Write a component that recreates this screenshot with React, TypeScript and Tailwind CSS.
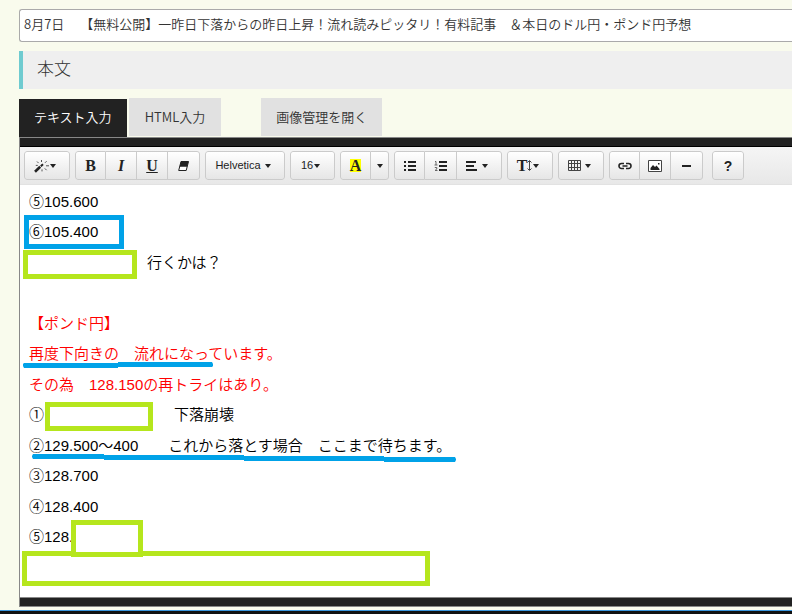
import { ReactNode, useState } from "react";
import clsx from "clsx";

type ToolType = {
  label: string;
  width: string;
  menu?: boolean;
  content: ReactNode;
};

function Caret() {
  return (
    <svg width="6" height="4" viewBox="0 0 6 4" aria-hidden="true">
      <path d="M0 0h6L3 4z" fill="#222" />
    </svg>
  );
}

function MagicIcon() {
  return (
    <svg width="15" height="14" viewBox="0 0 15 14" aria-hidden="true">
      <path d="M1 12.8 6.2 7.8" stroke="#222" strokeWidth="2.6" />
      <path d="M6.8 7.2 9 5.2" stroke="#222" strokeWidth="2" />
      <path
        d="M7.5 1v2M3 2.5l1.6 1.6M1.8 6.4h2M12.6 2.2 11 3.8M12 6.8h3M10.8 9.4l1.8 1.8M8 10.4v2"
        stroke="#555"
        strokeWidth="1"
      />
    </svg>
  );
}

function EraserIcon() {
  return (
    <svg width="11" height="10" viewBox="0 0 11 10" aria-hidden="true">
      <path d="M3 .5h7.5L8.2 9.5H.7z" fill="#fff" stroke="#222" />
      <path d="M3 .5h7.5L9.2 5.8H1.6z" fill="#222" />
    </svg>
  );
}

function ListIcon() {
  return (
    <svg width="12" height="10" viewBox="0 0 12 10" aria-hidden="true">
      <path d="M0 1h2M0 5h2M0 9h2M4 1h8M4 5h8M4 9h8" stroke="#222" strokeWidth="2" />
    </svg>
  );
}

function OrderedIcon() {
  return (
    <svg width="13" height="12" viewBox="0 0 13 12" aria-hidden="true">
      <path d="M5 2h8M5 6h8M5 10h8" stroke="#222" strokeWidth="2" />
      <path
        d="M1 1.5h1V5M.5 5h3M.8 7.5h2V9L1 10.5h2.5"
        fill="none"
        stroke="#666"
        strokeWidth="1"
      />
    </svg>
  );
}

function AlignIcon() {
  return (
    <svg width="12" height="10" viewBox="0 0 12 10" aria-hidden="true">
      <path d="M0 1h10M0 5h8M0 9h11" stroke="#222" strokeWidth="2" />
    </svg>
  );
}

function HeightIcon() {
  return (
    <svg width="5" height="11" viewBox="0 0 5 11" aria-hidden="true">
      <path d="M2.5 1v9M.5 2.5l2-2 2 2M.5 8.5l2 2 2-2" fill="none" stroke="#444" />
    </svg>
  );
}

function TableIcon() {
  return (
    <svg width="13" height="11" viewBox="0 0 13 11" aria-hidden="true">
      <path
        d="M.5.5h12v10H.5zM3.5.5v10M6.5.5v10M9.5.5v10M.5 3.5h12M.5 7.5h12"
        fill="none"
        stroke="#444"
      />
    </svg>
  );
}

function LinkIcon() {
  return (
    <svg width="14" height="8" viewBox="0 0 14 8" aria-hidden="true">
      <path
        d="M6 6.5H3.5a2.5 2.5 0 0 1 0-5H6M8 1.5h2.5a2.5 2.5 0 0 1 0 5H8M4.5 4h5"
        fill="none"
        stroke="#222"
        strokeWidth="1.6"
      />
    </svg>
  );
}

function PictureIcon() {
  return (
    <svg width="14" height="12" viewBox="0 0 14 12" aria-hidden="true">
      <path d="M.5.5h13v11H.5z" fill="#fff" stroke="#444" />
      <path d="M2.5 10V8L5 5l2 2 1.5-1.5 3 3.500v1z" fill="#222" />
      <path d="M10 3h1.500v1.500H10z" fill="#222" />
    </svg>
  );
}

const serif = "font-['Liberation_Serif',serif] text-base";

const toolGroups: ToolType[][] = [
  [{ label: "スタイル", width: "w-[46px]", menu: true, content: <MagicIcon /> }],
  [
    { label: "太字", width: "w-[31px]", content: <b className={serif}>B</b> },
    { label: "斜体", width: "w-[31px]", content: <b className={clsx(serif, "italic")}>I</b> },
    { label: "下線", width: "w-[31px]", content: <b className={clsx(serif, "underline")}>U</b> },
    { label: "書式クリア", width: "w-[32px]", content: <EraserIcon /> },
  ],
  [
    {
      label: "フォント",
      width: "w-[80px]",
      menu: true,
      content: <span className="mr-[3px] text-[11px]">Helvetica</span>,
    },
  ],
  [
    {
      label: "文字サイズ",
      width: "w-[45px]",
      menu: true,
      content: <span className="text-[11px]">16</span>,
    },
  ],
  [
    {
      label: "文字色",
      width: "w-[31px]",
      content: <b className={clsx(serif, "bg-[#ffff00] leading-[13px]")}>A</b>,
    },
    { label: "色を選択", width: "w-[18px]", menu: true, content: null },
  ],
  [
    { label: "箇条書き", width: "w-[31px]", content: <ListIcon /> },
    { label: "番号付きリスト", width: "w-[32px]", content: <OrderedIcon /> },
    {
      label: "配置",
      width: "w-[45px]",
      menu: true,
      content: (
        <span className="mr-[3px]">
          <AlignIcon />
        </span>
      ),
    },
  ],
  [
    {
      label: "行の高さ",
      width: "w-[46px]",
      menu: true,
      content: (
        <span className="flex items-center">
          <b className={serif}>T</b>
          <HeightIcon />
        </span>
      ),
    },
  ],
  [
    {
      label: "表",
      width: "w-[46px]",
      menu: true,
      content: (
        <span className="mr-[3px]">
          <TableIcon />
        </span>
      ),
    },
  ],
  [
    { label: "リンク", width: "w-[31px]", content: <LinkIcon /> },
    { label: "画像", width: "w-[31px]", content: <PictureIcon /> },
    { label: "水平線", width: "w-[32px]", content: <span className="h-[2px] w-[9px] bg-[#222]" /> },
  ],
  [{ label: "ヘルプ", width: "w-[32px]", content: <b>?</b> }],
];

function Toolbar() {
  return (
    <div
      role="toolbar"
      className="flex gap-[5px] border-b border-[#e2e2e2] bg-linear-to-b from-[#f5f5f5] to-[#e8e8e8] px-1 py-1 font-['Liberation_Sans',sans-serif] text-sm text-[#222]"
    >
      {toolGroups.map((group, i) => (
        <div
          key={i}
          className="flex h-[29px] shrink-0 divide-x divide-[#ccc] overflow-hidden rounded-[3px] last:ml-1"
        >
          {group.map((tool) => (
            <button
              key={tool.label}
              type="button"
              aria-label={tool.label}
              aria-haspopup={tool.menu ? "menu" : undefined}
              className={clsx(
                "flex items-center justify-center gap-px border-y border-[#cbcbcb] bg-linear-to-b from-white to-[#e6e6e6] first:rounded-l-[3px] first:border-l last:rounded-r-[3px] last:border-r",
                tool.menu && tool.content && "pr-1",
                tool.width,
              )}
            >
              {tool.content}
              {tool.menu && <Caret />}
            </button>
          ))}
        </div>
      ))}
    </div>
  );
}

// positions are relative to the editable area
function Annotations() {
  return (
    <div className="pointer-events-none absolute inset-0" aria-hidden="true">
      <div className="absolute top-[30px] left-[4px] h-[34px] w-[100px] border-5 border-[#00a2e8]" />
      <div className="absolute top-[65px] left-[3px] h-[29px] w-[114px] border-5 border-[#b5e61d] bg-white" />
      <div className="absolute top-[217px] left-[25px] h-[29px] w-[108px] border-5 border-[#b5e61d] bg-white" />
      <div className="absolute top-[366px] left-[2px] h-[35px] w-[408px] border-5 border-[#b5e61d] bg-white" />
      <div className="absolute top-[335px] left-[51px] h-[37px] w-[72px] border-5 border-[#b5e61d] bg-white" />
      <svg className="absolute top-0 left-0" width="440" height="290" fill="#00a2e8">
        <path d="M4 178h94v-1h94l1 2v2l-1 1H98v1H4l-1-2v-2z" />
        <path d="M13 269h71v1h140v1h140v1h71l1 2v1l-1 2h-71v-1H224v-1H84v-1H13l-1-2v-1z" />
      </svg>
    </div>
  );
}

function Editor() {
  return (
    <div className="relative bg-white">
      <div
        contentEditable
        suppressContentEditableWarning
        role="textbox"
        aria-label="本文"
        className="min-h-[412px] px-[9px] pt-[2px] text-[15px] leading-[30px] font-[350] text-black outline-none font-['Liberation_Sans','Noto_Sans_CJK_JP',sans-serif] [&>p]:h-[30px] [&>p]:whitespace-pre [&>p:nth-child(even)]:mb-px"
      >
        <p>⑤105.600</p>
        <p>⑥105.400</p>
        <p>
          <span className="inline-block w-[118px]" />
          行くかは？
        </p>
        <p />
        <p className="text-[#ff0000]">【ポンド円】</p>
        <p className="text-[#ff0000]">再度下向きの　流れになっています。</p>
        <p className="text-[#ff0000]">その為　128.150の再トライはあり。</p>
        <p>
          ①<span className="inline-block w-[130px]" />
          下落崩壊
        </p>
        <p>②129.500～400　　これから落とす場合　ここまで待ちます。</p>
        <p>③128.700</p>
        <p>④128.400</p>
        <p>⑤128.</p>
      </div>
      <Annotations />
    </div>
  );
}

const tabs = ["テキスト入力", "HTML入力"];

function App() {
  const [title, setTitle] = useState(
    "8月7日　 【無料公開】一昨日下落からの昨日上昇！流れ読みピッタリ！有料記事　＆本日のドル円・ポンド円予想",
  );
  const [activeTab, setActiveTab] = useState(tabs[0]);

  return (
    <div className="overflow-hidden bg-[#f9fbed] font-['Noto_Sans_CJK_JP',sans-serif] text-[13px] font-[350] text-[#333]">
      <main className="pt-[9px] pb-[3px] pl-[19px]">
        <input
          type="text"
          aria-label="タイトル"
          value={title}
          onChange={(e) => setTitle(e.target.value)}
          className="block h-[33px] w-full rounded-l-[3px] border border-r-0 border-[#aaa] bg-white pb-1 pl-1 outline-none"
        />
        <h2 className="mt-[9px] h-[38px] border-l-4 border-[#6fcbd0] bg-[#efefef] pl-[14px] text-[17px] leading-[34px] font-light">
          本文
        </h2>

        <div className="mt-[9px] flex h-[39px] items-start">
          {tabs.map((tab) => (
            <button
              key={tab}
              type="button"
              onClick={() => setActiveTab(tab)}
              className={clsx(
                "mr-[2px]",
                activeTab === tab
                  ? "mt-px h-[38px] bg-[#222] px-[15px] pb-[2px] text-white"
                  : "h-[38px] bg-[#e1e1e1] px-4",
              )}
            >
              {tab}
            </button>
          ))}
          <button type="button" className="ml-[38px] h-[38px] bg-[#e1e1e1] px-[15px]">
            画像管理を開く
          </button>
        </div>

        <div className="border-y border-l border-[#888]">
          <div className="h-[9px] border-b border-black bg-[#222]" />
          <Toolbar />
          <Editor />
          <div className="h-[9px] border-t border-[#888] bg-[#222]" />
        </div>
      </main>
      <div className="h-[4px] border-t border-[#3a96dd] bg-[#111]" />
    </div>
  );
}

export default App;
